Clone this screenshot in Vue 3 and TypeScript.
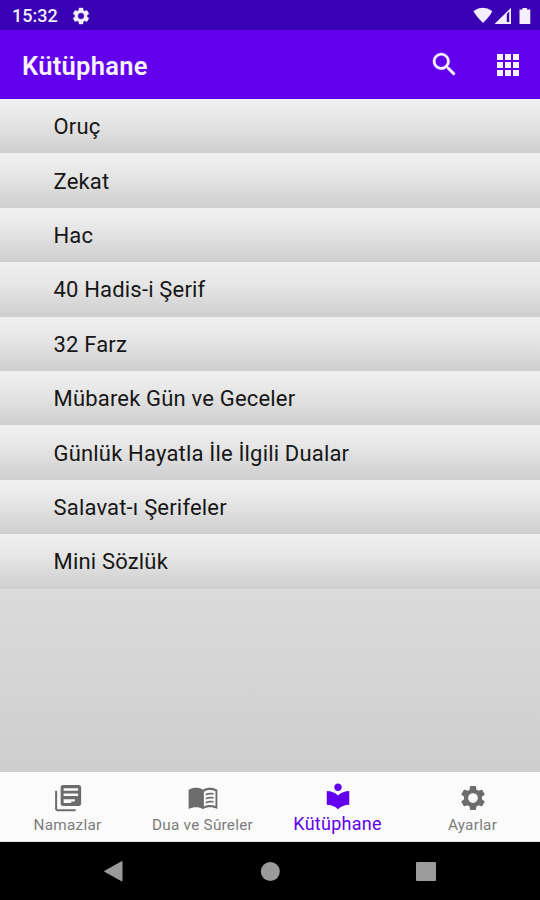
<script setup lang="ts">
interface Tab {
  label: string
  path: string
  active?: boolean
}

const gear =
  'M19.14 12.94c.04-.3.06-.61.06-.94 0-.32-.02-.64-.07-.94l2.03-1.58c.18-.14.23-.41.12-.61l-1.92-3.32c-.12-.22-.37-.29-.59-.22l-2.39.96c-.5-.38-1.03-.7-1.62-.94l-.36-2.54c-.04-.24-.24-.41-.48-.41h-3.84c-.24 0-.43.17-.47.41l-.36 2.54c-.59.24-1.13.57-1.62.94l-2.39-.96c-.22-.08-.47 0-.59.22L2.74 8.87c-.12.21-.08.47.12.61l2.03 1.58c-.05.3-.09.63-.09.94s.02.64.07.94l-2.03 1.58c-.18.14-.23.41-.12.61l1.92 3.32c.12.22.37.29.59.22l2.39-.96c.5.38 1.03.7 1.62.94l.36 2.54c.05.24.24.41.48.41h3.84c.24 0 .44-.17.47-.41l.36-2.54c.59-.24 1.13-.56 1.62-.94l2.39.96c.22.08.47 0 .59-.22l1.92-3.32c.12-.22.07-.47-.12-.61l-2.01-1.58zM12 15.9a3.9 3.9 0 1 1 0-7.8 3.9 3.9 0 0 1 0 7.8z'

const items: string[] = [
  'Oruç',
  'Zekat',
  'Hac',
  '40 Hadis-i Şerif',
  '32 Farz',
  'Mübarek Gün ve Geceler',
  'Günlük Hayatla İle İlgili Dualar',
  'Salavat-ı Şerifeler',
  'Mini Sözlük',
]

const tabs: Tab[] = [
  {
    label: 'Namazlar',
    path: 'M1.7 6.2h1.6v14.7h14.8v1.6H3.5c-1 0-1.8-.8-1.8-1.8zM8 1.5h12.6c1.1 0 1.9.8 1.9 1.9v13c0 1.1-.8 1.9-1.9 1.9H8c-1.1 0-1.9-.8-1.9-1.9V3.4c0-1.1.8-1.9 1.9-1.9zM8.5 4.1v2.1h11.6V4.1zM8.5 8.3v2h11.6v-2zM8.5 12.9v3.1h6.1v-1.3h2.9v-1.8z',
  },
  {
    label: 'Dua ve Sûreler',
    path: 'M12 5.4C10.5 4.1 8.4 3.7 6.4 3.7S2.1 4.2.5 5.4V20.7C2.3 19.9 4.4 19.4 6.4 19.4c2 0 4.1.4 5.6 1.5 1.5-1.1 3.6-1.5 5.6-1.5 2 0 4.1.5 5.9 1.3V5.4C21.9 4.2 19.6 3.7 17.6 3.7s-4.1.4-5.6 1.7zM12.7 7.1c1.4-1.1 3.1-1.5 4.9-1.5 1.6 0 3.1.3 4.4.9V18.3c-1.3-.5-2.8-.7-4.4-.7-1.8 0-3.5.4-4.9 1.2zM14.2 8.6v1.3c2-.9 4.2-1 6.3-.5V8.1c-2.1-.5-4.3-.4-6.3.5zM14.2 11.8v1.3c2-.9 4.2-1 6.3-.5v-1.3c-2.1-.5-4.3-.4-6.3.5zM14.2 15v1.3c2-.9 4.2-1 6.3-.5v-1.3c-2.1-.5-4.3-.4-6.3.5z',
  },
  {
    label: 'Kütüphane',
    path: 'M12 11.55C9.64 9.35 6.48 8 3 8v11c3.48 0 6.64 1.35 9 3.55 2.36-2.19 5.52-3.55 9-3.55V8c-3.48 0-6.64 1.35-9 3.55zM12 8c1.66 0 3-1.34 3-3s-1.34-3-3-3-3 1.34-3 3 1.34 3 3 3z',
    active: true,
  },
  { label: 'Ayarlar', path: gear },
]
</script>

<template>
  <div class="screen">
    <div class="status">
      <span class="clock">15:32</span>
      <svg class="status-gear" viewBox="0 0 24 24"><path :d="gear" /></svg>
      <svg class="signals" viewBox="0 0 60 18">
        <path d="M1.5 4Q10.7 -2.4 20.2 4Q19.5 7.5 11 16Q3 8 1.5 4z" />
        <path fill-rule="evenodd" d="M39 .7V17H22.5zM34.8 7V15H37.2V4.5z" />
        <path d="M50.5 1h4.5v1.5h3.3V17H47.5V2.5h3z" />
      </svg>
    </div>
    <header class="bar">
      <h1>Kütüphane</h1>
      <svg class="search" viewBox="0 0 24 24">
        <path d="M15.5 14h-.79l-.28-.27C15.41 12.59 16 11.11 16 9.5 16 5.91 13.09 3 9.5 3S3 5.91 3 9.5 5.91 16 9.5 16c1.61 0 3.09-.59 4.23-1.57l.27.28v.79l5 4.99L20.49 19l-4.99-5zm-6 0C7.01 14 5 11.99 5 9.5S7.01 5 9.5 5 14 7.01 14 9.5 11.99 14 9.5 14z" />
      </svg>
      <svg class="apps" viewBox="0 0 22 22">
        <path d="M0 0h6v6H0zM8 0h6v6H8zM16 0h6v6h-6zM0 8h6v6H0zM8 8h6v6H8zM16 8h6v6h-6zM0 16h6v6H0zM8 16h6v6H8zM16 16h6v6h-6z" />
      </svg>
    </header>
    <main class="content">
      <ul>
        <li v-for="item in items" :key="item"><span>{{ item }}</span></li>
      </ul>
    </main>
    <nav class="tabs">
      <div v-for="tab in tabs" :key="tab.label" class="tab" :class="{ active: tab.active }">
        <svg viewBox="0 0 24 24"><path fill-rule="evenodd" :d="tab.path" /></svg>
        <span>{{ tab.label }}</span>
      </div>
    </nav>
    <div class="system">
      <svg viewBox="0 0 20 22"><path d="M18 1.5v19.5L.5 11.3z" stroke-width="1" stroke-linejoin="round" /></svg>
      <svg viewBox="0 0 20 22"><circle cx="10.3" cy="11.5" r="9.5" /></svg>
      <svg viewBox="0 0 20 22"><rect x="0" y="2" width="20" height="19" rx="1" /></svg>
    </div>
  </div>
</template>

<style>
body {
  margin: 0;
}
</style>

<style scoped>
.screen {
  width: 540px;
  height: 900px;
  display: flex;
  flex-direction: column;
  overflow: hidden;
  font-family: Roboto, 'Liberation Sans', sans-serif;
}
svg {
  display: block;
  fill: currentColor;
}
.status {
  box-sizing: border-box;
  height: 30px;
  flex: none;
  display: flex;
  align-items: center;
  padding: 2px 8px 0 12px;
  background: #3a00b3;
  color: #f3efff;
}
.clock {
  font-size: 18px;
  font-weight: 500;
  line-height: 28px;
}
.status-gear {
  width: 20px;
  height: 20px;
  margin-left: 13px;
}
.status-gear path {
  stroke: currentColor;
  stroke-width: 0.5;
}
.signals {
  width: 60px;
  height: 18px;
  margin-left: auto;
}
.bar {
  box-sizing: border-box;
  height: 69px;
  flex: none;
  display: flex;
  align-items: center;
  padding: 0 21px 0 22px;
  background: #6200ee;
  color: #f8f3ff;
}
h1 {
  margin: 3px auto 0 0;
  font-size: 25.5px;
  font-weight: 600;
  line-height: 30px;
  letter-spacing: 0.3px;
}
.search {
  width: 31px;
  height: 31px;
  margin-right: 37px;
}
.search path {
  stroke: currentColor;
  stroke-width: 0.2;
}
.apps {
  width: 22px;
  height: 22px;
}
.content {
  flex: 1;
  background: linear-gradient(#efefef, #dbdbdb 73%, #cecece);
}
ul {
  margin: 0;
  padding: 0;
  list-style: none;
}
li {
  box-sizing: border-box;
  height: 54.4px;
  display: flex;
  align-items: center;
  padding: 1px 0 0 53.5px;
  background: linear-gradient(#f0f0f0, #e6e6e6 40%, #cecece);
  color: #161616;
  font-size: 22px;
  letter-spacing: 0.18px;
}
.tabs {
  box-sizing: border-box;
  height: 70px;
  flex: none;
  display: grid;
  grid-template-columns: repeat(4, 1fr);
  border-bottom: 1px solid #e4e4e4;
  background: #fbfbfb;
}
.tab {
  display: flex;
  flex-direction: column;
  align-items: center;
  padding-top: 10.5px;
  color: #6c6c6c;
}
.tab svg {
  width: 30px;
  height: 30px;
}
.tab span {
  margin-top: 3px;
  font-size: 15.3px;
  line-height: 18px;
  letter-spacing: 0.25px;
  color: #7c7c7c;
}
.tab.active {
  padding-top: 8.5px;
  color: #6200ee;
}
.tab.active span {
  font-size: 18px;
  line-height: 20px;
  color: #6200ee;
}
.system {
  height: 58px;
  flex: none;
  display: flex;
  justify-content: center;
  align-items: center;
  gap: 136px;
  background: #000;
  color: #9b9b9b;
}
.system svg {
  width: 20px;
  height: 22px;
  stroke: currentColor;
  stroke-width: 0;
}
</style>
